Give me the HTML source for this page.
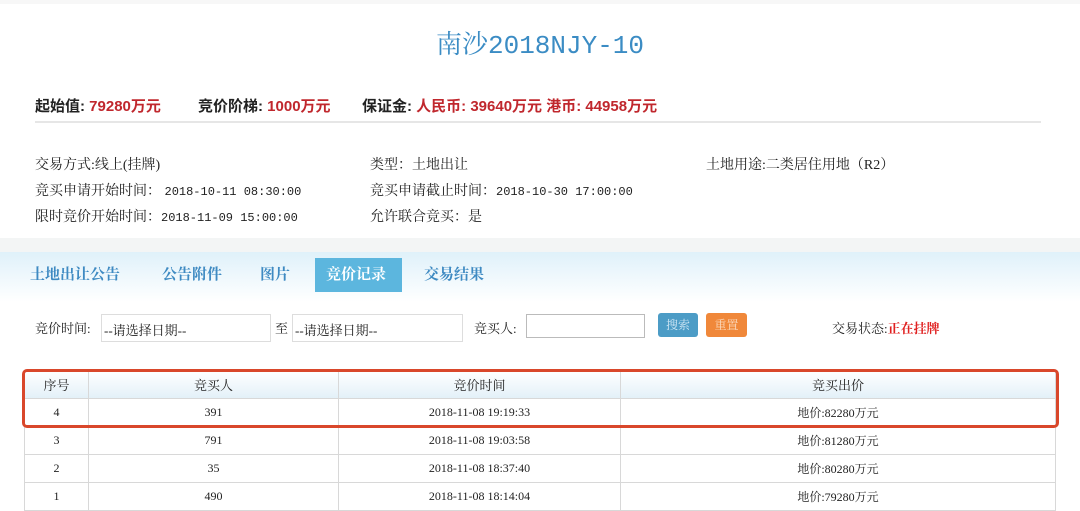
<!DOCTYPE html>
<html><head><meta charset="utf-8">
<style>
*{margin:0;padding:0;box-sizing:border-box}
body{width:1080px;height:511px;overflow:hidden;background:#fff;font-family:"Liberation Serif","Noto Serif CJK SC",serif;color:#222;position:relative}
.a{position:absolute;white-space:nowrap}
.title{left:0;width:1080px;text-align:center;top:24px;font-size:26px;color:#3b8cc4;font-family:"Liberation Mono","Noto Serif CJK SC",monospace}
.sum{top:95px;font-size:15px;font-weight:bold;font-family:"Liberation Sans","Noto Sans CJK SC",sans-serif}
.red{color:#c0272d}
.info{font-size:14px}
.m{font-family:"Liberation Mono",monospace;font-size:12px}
td{font-size:12px;text-align:center;border:1px solid #d8d8d8;height:28px}
</style></head><body>
<div class="a" style="left:0;top:0;width:1080px;height:4px;background:#f7f7f7"></div>
<div class="a title">南沙2018NJY-10</div>
<div class="a sum" style="left:35px">起始值: <span class="red">79280万元</span></div>
<div class="a sum" style="left:198px">竞价阶梯: <span class="red">1000万元</span></div>
<div class="a sum" style="left:362px">保证金: <span class="red">人民币: 39640万元 港币: 44958万元</span></div>
<div class="a" style="left:35px;top:121px;width:1006px;height:2px;background:#e6e6e6"></div>
<div class="a info" style="left:35px;top:154px">交易方式:线上(挂牌)</div>
<div class="a info" style="left:370px;top:154px">类型：土地出让</div>
<div class="a info" style="left:706px;top:154px">土地用途:二类居住用地（R2）</div>
<div class="a info" style="left:35px;top:180px">竞买申请开始时间： <span class="m">2018-10-11 08:30:00</span></div>
<div class="a info" style="left:370px;top:180px">竞买申请截止时间：<span class="m">2018-10-30 17:00:00</span></div>
<div class="a info" style="left:35px;top:206px">限时竞价开始时间：<span class="m">2018-11-09 15:00:00</span></div>
<div class="a info" style="left:370px;top:206px">允许联合竞买：是</div>
<div class="a" style="left:0;top:238px;width:1080px;height:14px;background:#f3f5f5"></div>
<div class="a" style="left:0;top:252px;width:1080px;height:50px;background:linear-gradient(#dff1fa,#fff)"></div>
<div class="a" style="left:315px;top:258px;width:87px;height:34px;background:#5cb6de"></div>
<div class="a" style="left:30px;top:263px;font-size:15px;color:#3e8ac2;font-weight:bold">土地出让公告</div>
<div class="a" style="left:162px;top:263px;font-size:15px;color:#3e8ac2;font-weight:bold">公告附件</div>
<div class="a" style="left:260px;top:263px;font-size:15px;color:#3e8ac2;font-weight:bold">图片</div>
<div class="a" style="left:326px;top:263px;font-size:15px;color:#fff;font-weight:bold">竞价记录</div>
<div class="a" style="left:424px;top:263px;font-size:15px;color:#3e8ac2;font-weight:bold">交易结果</div>
<div class="a" style="left:35px;top:318px;font-size:13px">竞价时间:</div>
<div class="a" style="left:101px;top:314px;width:170px;height:28px;border:1px solid #ddd;font-size:13px;padding:5px 2px">--请选择日期--</div>
<div class="a" style="left:275px;top:318px;font-size:13px">至</div>
<div class="a" style="left:292px;top:314px;width:171px;height:28px;border:1px solid #ddd;font-size:13px;padding:5px 2px">--请选择日期--</div>
<div class="a" style="left:474px;top:318px;font-size:13px">竞买人:</div>
<div class="a" style="left:526px;top:314px;width:119px;height:24px;border:1px solid #bbb"></div>
<div class="a" style="left:658px;top:313px;width:40px;height:24px;background:#4c9cc6;border-radius:3px;color:#cfe6f4;font-size:12px;text-align:center;line-height:24px">搜索</div>
<div class="a" style="left:706px;top:313px;width:41px;height:24px;background:#f0883a;border-radius:3px;color:#fbd9bd;font-size:12px;text-align:center;line-height:24px">重置</div>
<div class="a" style="left:832px;top:318px;font-size:13px">交易状态:<span style="color:#e02020;font-weight:bold">正在挂牌</span></div>
<table class="a" style="left:24px;top:370px;width:1032px;border-collapse:collapse">
<tr style="background:linear-gradient(#fff,#e2f0f8)"><td style="width:64px;height:27px;font-size:13px">序号</td><td style="width:250px;font-size:13px">竞买人</td><td style="width:282px;font-size:13px">竞价时间</td><td style="font-size:13px">竞买出价</td></tr>
<tr><td>4</td><td>391</td><td>2018-11-08 19:19:33</td><td>地价:82280万元</td></tr>
<tr><td>3</td><td>791</td><td>2018-11-08 19:03:58</td><td>地价:81280万元</td></tr>
<tr><td>2</td><td>35</td><td>2018-11-08 18:37:40</td><td>地价:80280万元</td></tr>
<tr><td>1</td><td>490</td><td>2018-11-08 18:14:04</td><td>地价:79280万元</td></tr>
</table>
<div class="a" style="left:22px;top:369px;width:1037px;height:59px;border:3px solid #d9472b;border-radius:5px"></div>
</body></html>
